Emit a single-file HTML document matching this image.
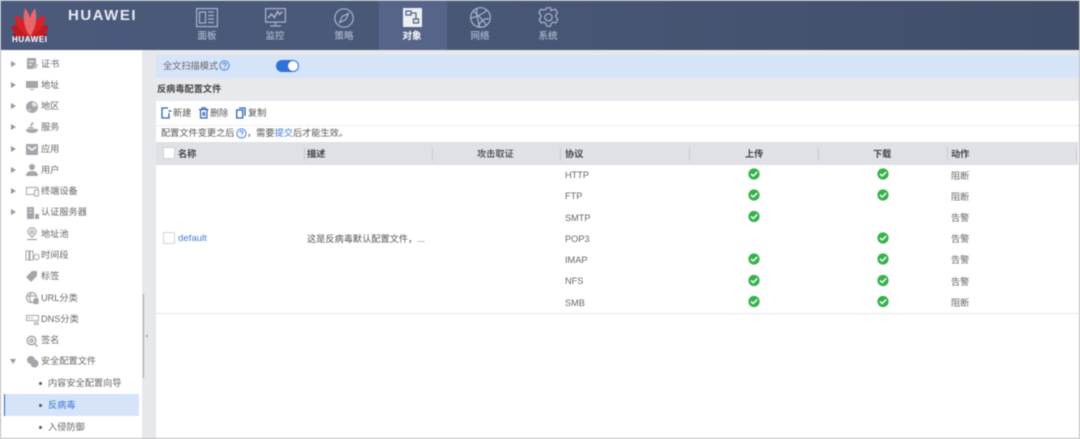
<!DOCTYPE html>
<html lang="zh"><head><meta charset="utf-8"><style>
html,body{margin:0;padding:0;width:1080px;height:439px;overflow:hidden;background:#fff}
#p{position:relative;width:1080px;height:439px;overflow:hidden;filter:blur(.5px);font-family:"Liberation Sans","Noto Sans CJK SC",sans-serif;font-size:9.2px;color:#666}
#p div,#p svg{position:absolute}
.t{white-space:nowrap;line-height:12px;height:12px}
.n{white-space:nowrap;line-height:12px;width:68px;text-align:center;color:#aab4cb;font-size:9.5px;top:31px;font-weight:500}
.b{font-weight:700;color:#444}
.l{background:#c9cbd2;width:1px;height:14px;top:147px}
.a{width:0;height:0;border-left:5px solid #999;border-top:3px solid transparent;border-bottom:3px solid transparent;left:11px}
.d{width:3px;height:3px;border-radius:2px;background:#555;left:39px}
.c{width:10px;height:10px;border:1px solid #cfd1d6;background:#fff;border-radius:1px}
</style></head><body><div id="p">

<!-- header -->
<div style="left:0;top:1px;width:1080px;height:49px;background:linear-gradient(90deg,#4b5a7c,#4a5878 40%,#414e6a)"></div>
<div style="left:379px;top:1px;width:68px;height:49px;background:#566489"></div>
<svg style="left:10px;top:7px" width="40" height="30" viewBox="0 0 40 30">
<path d="M20 29C16 26 16 16 20 11C24 16 24 26 20 29z" fill="#a8141c" transform="rotate(-86 20 29)"/>
<path d="M20 29C16 26 16 16 20 11C24 16 24 26 20 29z" fill="#a8141c" transform="rotate(86 20 29)"/>
<path d="M20 29C13 24 13 14 20 8C27 14 27 24 20 29z" fill="#c21a22" transform="rotate(-63 20 29)"/>
<path d="M20 29C13 24 13 14 20 8C27 14 27 24 20 29z" fill="#c21a22" transform="rotate(63 20 29)"/>
<path d="M20 29C14 22 14 10 20 4C26 10 26 22 20 29z" fill="#d6222a" transform="rotate(-36 20 29)"/>
<path d="M20 29C14 22 14 10 20 4C26 10 26 22 20 29z" fill="#d6222a" transform="rotate(36 20 29)"/>
<path d="M20 29C15.500 21 15.500 9 20 1C24.500 9 24.500 21 20 29z" fill="#e8666c" transform="rotate(-10 20 29)"/>
<path d="M20 29C15.500 21 15.500 9 20 1C24.500 9 24.500 21 20 29z" fill="#e8666c" transform="rotate(10 20 29)"/>
</svg>
<div class="t" style="left:12px;top:34px;color:#fff;font-weight:700;font-size:8px;letter-spacing:.6px">HUAWEI</div>
<div class="t" style="left:68px;top:9px;color:#e6e9f0;font-weight:700;font-size:15px;letter-spacing:1.5px;line-height:14px;height:14px">HUAWEI</div>

<!-- nav icons -->
<svg style="left:196px;top:8px" width="22" height="20" viewBox="0 0 22 20" fill="none" stroke="#aab4cb" stroke-width="1.2"><rect x=".6" y=".6" width="20.8" height="18"/><rect x="3.5" y="4" width="6" height="11"/><path d="M12 4h6M12 7.5h6M12 11h6M12 14.500h6"/></svg>
<svg style="left:265px;top:8px" width="21" height="20" viewBox="0 0 21 20" fill="none" stroke="#aab4cb" stroke-width="1.2"><rect x=".6" y=".6" width="19.800" height="13.500"/><path d="M3 10l3.500-4 3 3.500 3-6 2 3 3-3" stroke-width="1.500"/><path d="M10.500 14v3M5 18h11"/></svg>
<svg style="left:334px;top:8px" width="20" height="20" viewBox="0 0 20 20" fill="none" stroke="#aab4cb" stroke-width="1.200"><circle cx="10" cy="10" r="9.200"/><path d="M14.500 5.500l-2.800 6.200-6.200 2.800 2.800-6.200z"/></svg>
<svg style="left:403px;top:8px" width="19" height="19" viewBox="0 0 19 19"><rect width="19" height="19" fill="#eef0f5"/><g fill="none" stroke="#566489" stroke-width="1.300"><rect x="3" y="3" width="5" height="4"/><rect x="10.500" y="11" width="5" height="4"/><path d="M8 5h5v6"/></g></svg>
<svg style="left:470px;top:7px" width="21" height="21" viewBox="0 0 21 21" fill="none" stroke="#aab4cb" stroke-width="1.200"><circle cx="10.500" cy="10.500" r="9.800"/><path d="M3 4c4 3 10 9 13 14M1 11c5-1 11-3 16-8M7 1c-1 6 1 14 3 19M19 12c-4-1-8 2-11 7"/></svg>
<svg style="left:538px;top:7px" width="21" height="21" viewBox="0 0 21 21" fill="none" stroke="#aab4cb" stroke-width="1.200"><path d="M8.500.8h4l.6 2.800 2-.9 2.400-.4 2 3.400-1.700 2.200.3 2.400 1.700 2.200-2 3.400-2.700-.7-2 1.300-.6 2.700h-4l-.6-2.700-2-1.300-2.700.7-2-3.400 1.700-2.200.0-2.400L.8 5.700l2-3.400 2.700.7 2.400-.6z"/><circle cx="10.500" cy="10.300" r="3.600"/></svg>
<div class="n" style="left:173px">面板</div>
<div class="n" style="left:241px">监控</div>
<div class="n" style="left:310px">策略</div>
<div class="n" style="left:378px;color:#fff;font-weight:700">对象</div>
<div class="n" style="left:446px">网络</div>
<div class="n" style="left:514px">系统</div>

<!-- gutters and bands -->
<div style="left:142px;top:50px;width:14px;height:389px;background:#e7e8eb"></div>
<div style="left:142px;top:50px;width:938px;height:5px;background:#e7e8eb"></div>
<div style="left:156px;top:55px;width:924px;height:23px;background:#d6e4f9"></div>
<div style="left:156px;top:78px;width:924px;height:23px;background:#e8e9ec"></div>
<div style="left:156px;top:125px;width:924px;height:1px;background:#ececee"></div>
<div style="left:156px;top:142px;width:922px;height:23px;background:#e0e1e6"></div>
<div style="left:156px;top:313px;width:922px;height:1px;background:#e4e5e8"></div>
<div style="left:143px;top:294px;width:1px;height:84px;background:#a5a7ac"></div>
<div style="left:145px;top:334px;width:0;height:0;border-right:3px solid #b5b7bc;border-top:2px solid transparent;border-bottom:2px solid transparent"></div>

<!-- scan row -->
<div class="t" style="left:163px;top:60px">全文扫描模式</div>
<svg style="left:219px;top:60px" width="11" height="11" fill="none" stroke="#4a82d8"><circle cx="5.500" cy="5.500" r="4.600"/><path d="M4 4.500c0-2 3-2 3 0 0 1-1.500 1-1.500 2.200M5.500 8v.8"/></svg>
<div style="left:276px;top:60px;width:23px;height:12px;border-radius:6px;background:#2f72d8"></div>
<div style="left:288px;top:61px;width:10px;height:10px;border-radius:5px;background:#fff"></div>
<div class="t b" style="left:157px;top:83px">反病毒配置文件</div>

<!-- toolbar -->
<svg style="left:161px;top:107px" width="11" height="12" fill="none" stroke="#2f62b0" stroke-width="1.300"><path d="M7 1H1v10h7V6M7.500 4h3"/></svg>
<div class="t" style="left:173px;top:107px;color:#555">新建</div>
<svg style="left:199px;top:107px" width="10" height="12" fill="none" stroke="#2f62b0" stroke-width="1.200"><path d="M0 2.500h9.500M3 2V.8h3.500V2M1.500 3v8h6.500V3M4 5v4M5.700 5v4"/></svg>
<div class="t" style="left:210px;top:107px;color:#555">删除</div>
<svg style="left:236px;top:107px" width="10" height="12" fill="none" stroke="#2f62b0" stroke-width="1.300"><path d="M.7 3h6v8h-6zM3 1h6v8"/></svg>
<div class="t" style="left:248px;top:107px;color:#555">复制</div>
<div class="t" style="left:161px;top:127px;color:#555">配置文件变更之后</div>
<svg style="left:236px;top:128px" width="11" height="11" fill="none" stroke="#4a82d8"><circle cx="5.500" cy="5.500" r="4.600"/><path d="M4 4.500c0-2 3-2 3 0 0 1-1.500 1-1.500 2.200M5.500 8v.8"/></svg>
<div class="t" style="left:247px;top:127px;color:#555">，需要<span style="color:#3f78d6">提交</span>后才能生效。</div>

<!-- table header -->
<div class="c" style="left:163px;top:147px"></div>
<div class="t b" style="left:178px;top:148px">名称</div>
<div class="l" style="left:304px"></div>
<div class="t b" style="left:307px;top:148px">描述</div>
<div class="l" style="left:432px"></div>
<div class="t b" style="left:477px;top:148px;font-weight:500">攻击取证</div>
<div class="l" style="left:560px"></div>
<div class="t b" style="left:565px;top:148px">协议</div>
<div class="l" style="left:689px"></div>
<div class="t b" style="left:745px;top:148px">上传</div>
<div class="l" style="left:818px"></div>
<div class="t b" style="left:873px;top:148px">下载</div>
<div class="l" style="left:947px"></div>
<div class="t b" style="left:951px;top:148px">动作</div>
<div class="l" style="left:1076px"></div>

<!-- table body -->
<div class="c" style="left:163px;top:232px"></div>
<div class="t" style="left:178px;top:233px;color:#4a7bd8;font-size:9.600px">default</div>
<div class="t" style="left:307px;top:233px;color:#555">这是反病毒默认配置文件，...</div>

<div class="t" style="left:565px;top:169px">HTTP</div>
<div class="t" style="left:565px;top:190px">FTP</div>
<div class="t" style="left:565px;top:212px">SMTP</div>
<div class="t" style="left:565px;top:233px">POP3</div>
<div class="t" style="left:565px;top:254px">IMAP</div>
<div class="t" style="left:565px;top:275px">NFS</div>
<div class="t" style="left:565px;top:297px">SMB</div>

<div class="t" style="left:951px;top:170px">阻断</div>
<div class="t" style="left:951px;top:191px">阻断</div>
<div class="t" style="left:951px;top:212px">告警</div>
<div class="t" style="left:951px;top:233px">告警</div>
<div class="t" style="left:951px;top:254px">告警</div>
<div class="t" style="left:951px;top:276px">告警</div>
<div class="t" style="left:951px;top:297px">阻断</div>

<svg style="left:0;top:0" width="1080" height="439">
<g fill="#37b24a">
<circle cx="754" cy="174" r="5.600"/><circle cx="754" cy="195" r="5.600"/><circle cx="754" cy="216.500" r="5.600"/><circle cx="754" cy="259" r="5.600"/><circle cx="754" cy="280.500" r="5.600"/><circle cx="754" cy="301.500" r="5.600"/>
<circle cx="883" cy="174" r="5.600"/><circle cx="883" cy="195" r="5.600"/><circle cx="883" cy="238" r="5.600"/><circle cx="883" cy="259" r="5.600"/><circle cx="883" cy="280.500" r="5.600"/><circle cx="883" cy="301.500" r="5.600"/>
</g>
<g fill="none" stroke="#fff" stroke-width="1.500">
<path d="M751 174l2.200 2 4-4M751 195l2.200 2 4-4M751 216.500l2.200 2 4-4M751 259l2.200 2 4-4M751 280.500l2.200 2 4-4M751 301.500l2.200 2 4-4"/>
<path d="M880 174l2.200 2 4-4M880 195l2.200 2 4-4M880 238l2.200 2 4-4M880 259l2.200 2 4-4M880 280.500l2.200 2 4-4M880 301.500l2.200 2 4-4"/>
</g>
</svg>

<!-- sidebar -->
<div class="a" style="top:61px"></div><div class="a" style="top:82px"></div><div class="a" style="top:103px"></div><div class="a" style="top:124px"></div><div class="a" style="top:146px"></div><div class="a" style="top:167px"></div><div class="a" style="top:188px"></div><div class="a" style="top:209px"></div>
<div style="left:10px;top:359px;width:0;height:0;border-top:5px solid #999;border-left:3px solid transparent;border-right:3px solid transparent"></div>

<svg style="left:25px;top:57px" width="14" height="14" fill="#a3a6ab"><path d="M2 1h9v6l-3 5H2zM4 4h5v1H4zM4 7h3v1H4z" fill-rule="evenodd"/><path d="M9 11l3-4 1 1-3 4z"/></svg>
<svg style="left:25px;top:79px" width="14" height="12" fill="#a3a6ab"><path d="M1 2h12v7H1zM5 10h4v1H5z"/></svg>
<svg style="left:25px;top:100px" width="14" height="14" fill="#a3a6ab"><circle cx="7" cy="7" r="6"/><path d="M7 2c3 0 5 2 5 4l-3 1-2-2zM3 9l3 3-1-3z" fill="#e0e1e4"/></svg>
<svg style="left:25px;top:121px" width="14" height="14" fill="#a3a6ab"><path d="M1 8h12c0 3-2 4-6 4s-6-1-6-4zM3 6.500c2-1 4-1 7 1H3zM7 1l2 1-2 2 1 1-3 0z"/></svg>
<svg style="left:25px;top:143px" width="14" height="13" fill="#a3a6ab"><path d="M1 1h12v11H1zM3 3v2l4 3 4-3V3l-4 3z" fill-rule="evenodd"/></svg>
<svg style="left:25px;top:163px" width="14" height="14" fill="#a3a6ab"><circle cx="7" cy="4" r="3"/><path d="M1 13c0-4 3-5 6-5s6 1 6 5z"/></svg>
<svg style="left:25px;top:185px" width="15" height="13" fill="none" stroke="#a3a6ab"><path d="M9 9.500H1.500v-7h11v2M9.500 5h4v6h-4z"/></svg>
<svg style="left:25px;top:206px" width="15" height="14" fill="#a3a6ab"><path d="M2 1h7v12H2zM10 8h4v5h-4z"/><path d="M4 3h3v1H4zM4 6h3v1H4z" fill="#e5e5e5"/></svg>
<svg style="left:25px;top:227px" width="14" height="15" fill="none" stroke="#a3a6ab" stroke-width="1.300"><path d="M7 10C4.500 8 3 6.500 3 4.800a4 4 0 0 1 8 0C11 6.500 9.500 8 7 10z"/><circle cx="7" cy="5" r="1.300"/><path d="M2 12.500h10"/></svg>
<svg style="left:25px;top:249px" width="15" height="13" fill="none" stroke="#a3a6ab"><path d="M1 2h3v9H1zM5 2h3v9H5z"/><circle cx="11.500" cy="8" r="2.700"/></svg>
<svg style="left:25px;top:270px" width="14" height="13" fill="#a3a6ab"><path d="M7 1h5v5l-6 6-5-5z"/></svg>
<svg style="left:25px;top:291px" width="15" height="14" fill="none" stroke="#a3a6ab" stroke-width="1.200"><circle cx="6.500" cy="6.500" r="5"/><path d="M2 5h9M6 2c-2 3-2 6 0 9"/><rect x="9" y="8" width="4" height="4.500" fill="#a3a6ab"/></svg>
<svg style="left:25px;top:313px" width="15" height="13" fill="none" stroke="#a3a6ab"><path d="M1.500 2.500h12v5h-12zM3 5h2M6 5h2M9.500 9.500h3.500v2H9.500z"/></svg>
<svg style="left:25px;top:334px" width="14" height="14" fill="none" stroke="#a3a6ab" stroke-width="1.500"><circle cx="6.500" cy="6.500" r="4.300"/><circle cx="6.500" cy="6.500" r="1.500"/><path d="M10 10l2.500 2.500"/></svg>
<svg style="left:25px;top:355px" width="15" height="13" fill="#a3a6ab"><circle cx="6" cy="5" r="4"/><circle cx="9.500" cy="8.500" r="4"/></svg>

<div class="t" style="left:41px;top:58px">证书</div>
<div class="t" style="left:41px;top:79px">地址</div>
<div class="t" style="left:41px;top:100px">地区</div>
<div class="t" style="left:41px;top:121px">服务</div>
<div class="t" style="left:41px;top:143px">应用</div>
<div class="t" style="left:41px;top:164px">用户</div>
<div class="t" style="left:41px;top:185px">终端设备</div>
<div class="t" style="left:41px;top:206px">认证服务器</div>
<div class="t" style="left:41px;top:228px">地址池</div>
<div class="t" style="left:41px;top:249px">时间段</div>
<div class="t" style="left:41px;top:270px">标签</div>
<div class="t" style="left:41px;top:292px">URL分类</div>
<div class="t" style="left:41px;top:313px">DNS分类</div>
<div class="t" style="left:41px;top:334px">签名</div>
<div class="t" style="left:41px;top:355px">安全配置文件</div>

<div style="left:4px;top:394px;width:135px;height:22px;background:#d6e4f9"></div>
<div style="left:4px;top:394px;width:1px;height:22px;background:#2f62c0"></div>
<div class="d" style="top:382px"></div><div class="d" style="top:404px"></div><div class="d" style="top:426px"></div>
<div class="t" style="left:48px;top:377px">内容安全配置向导</div>
<div class="t" style="left:48px;top:399px;color:#3f78d6">反病毒</div>
<div class="t" style="left:48px;top:421px">入侵防御</div>

<!-- frame -->
<div style="left:0;top:0;width:1080px;height:1px;background:#b5b6b8"></div>
<div style="left:0;top:0;width:1px;height:439px;background:#b5b6b8"></div>
<div style="left:0;top:438px;width:1080px;height:1px;background:#b5b6b8"></div>
<div style="left:1079px;top:0;width:1px;height:439px;background:#b5b6b8"></div>
</div></body></html>
